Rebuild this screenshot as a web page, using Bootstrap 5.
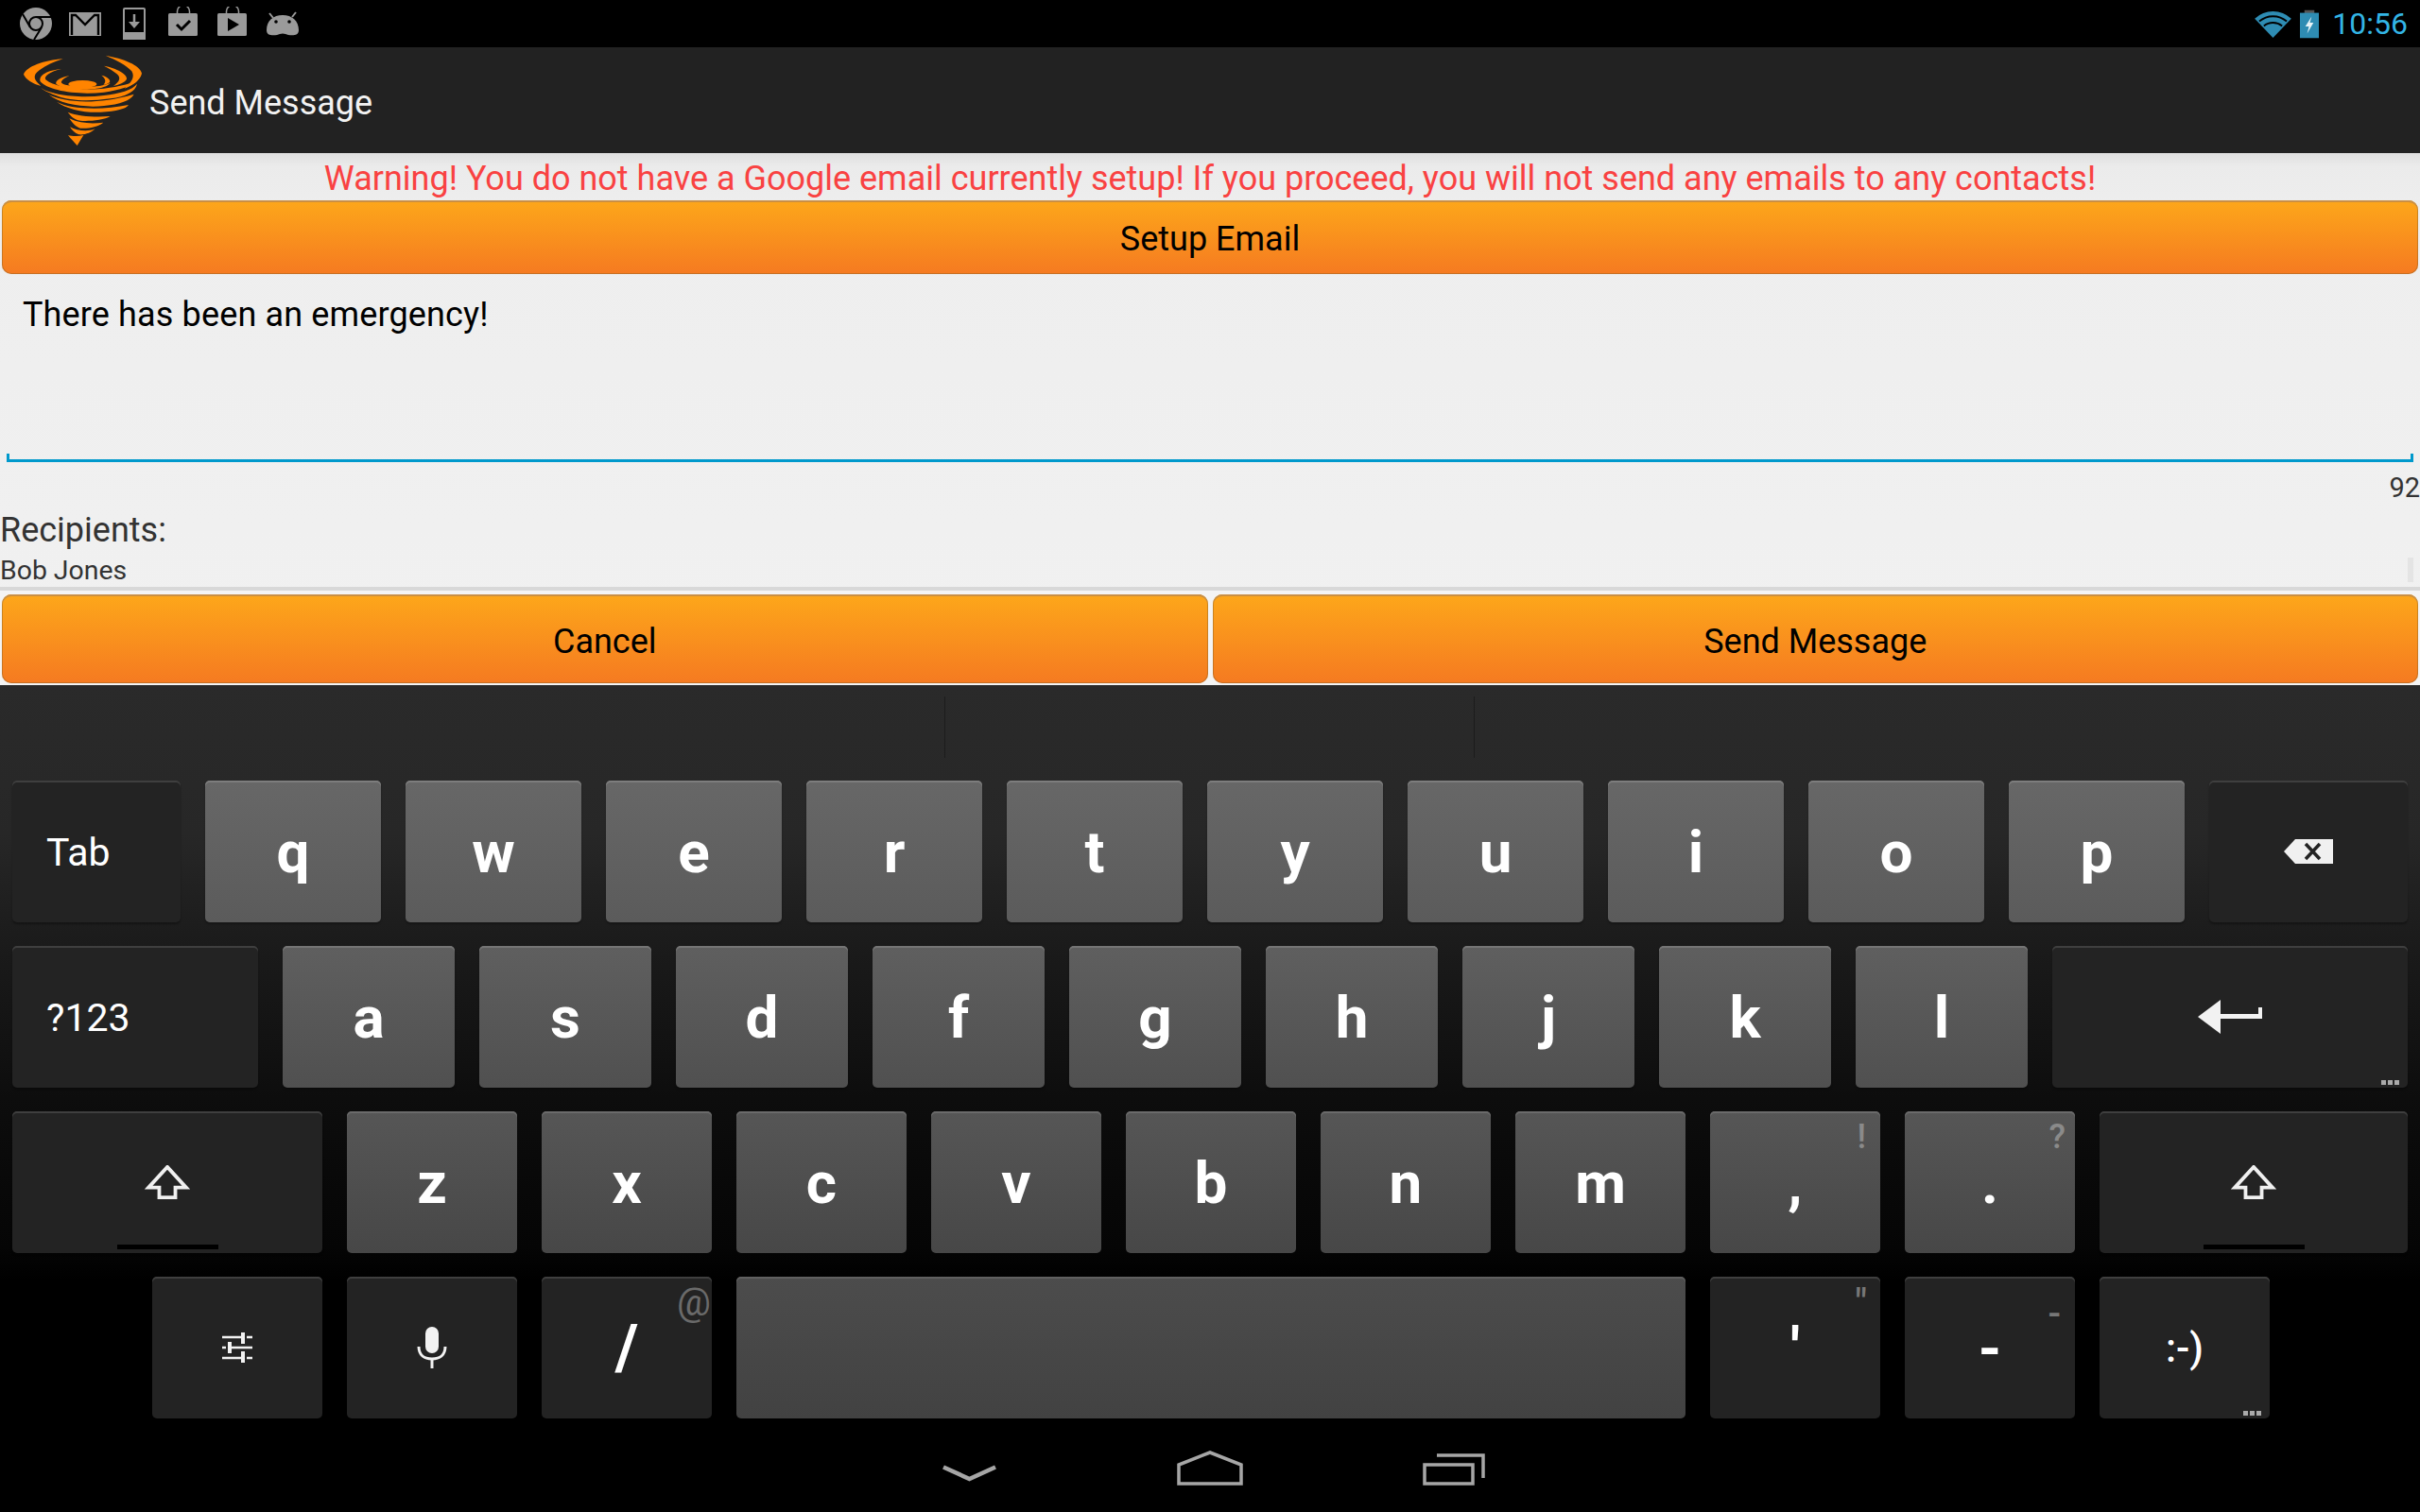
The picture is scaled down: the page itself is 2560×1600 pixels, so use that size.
<!DOCTYPE html>
<html lang="en">
<head>
<meta charset="utf-8">
<title>Send Message</title>
<link href="https://cdn.jsdelivr.net/npm/bootstrap@5.3.0/dist/css/bootstrap.min.css" rel="stylesheet">
<style>
html,body{margin:0;background:#000;}
body{width:2560px;height:1600px;overflow:hidden;font-family:Roboto,"Liberation Sans",sans-serif;}
.sbar{height:50px;background:#000;padding:0 13px 0 21px;}
.si2{margin-left:18px}.si3{margin-left:23px}.si4{margin-left:24px;margin-bottom:4px}.si5{margin-left:20px;margin-bottom:4px}.si6{margin-left:19px}
.clock{font-size:32px;color:#33b5e5;line-height:50px;margin-left:14px;}
.wifi{margin-right:9px}
.abar{height:112px;background:#222;padding-left:23px;}
.abar-title{font-size:36px;color:#f2f2f2;margin-left:7px;margin-top:5px;}
.content{height:563px;background:linear-gradient(#dfdfdf 0,#ebebeb 14px,#eee 60px,#f1f1f1 100%);}
.warn{height:50px;line-height:55px;text-align:center;font-size:36px;color:#f94242;}
.obtn{display:block;border:0;border-radius:10px;width:100%;padding:4px 0 0;color:#000;font-family:inherit;font-size:36px;background:linear-gradient(#fda71a 0,#f57a21 100%);box-shadow:inset 0 2px 0 #c98f45,inset 0 0 0 1px rgba(140,100,40,.45);}
.setup{height:78px;}
.padh2{padding:0 2px;}
.msg{height:199px;padding:19px 24px 0;font-size:36px;line-height:48px;color:#000;letter-spacing:.14px;}
.uline{height:9px;margin:-9px 7px 0;border:solid #0099cc;border-width:0 3px 3px 3px;}
.count{height:43px;text-align:right;font-size:29px;line-height:55px;color:#333;}
.rlabel{font-size:36px;line-height:58px;color:#333;height:44px;}
.rname{font-size:28.4px;line-height:55px;color:#333;height:45px;position:relative;}
.sbthumb{position:absolute;right:7px;top:14px;width:6px;height:26px;background:#e4e4e4;}
.rule{height:4px;background:#d8d8d8;}
.pair{height:100px;padding:4px 2px 2px;gap:5px;background:#f4f4f4;}
.pair .obtn{height:94px;flex:1 1 0;padding-top:6px;}
.kbd{height:875px;background:linear-gradient(#2a2a2a 0,#272727 18%,#1c1c1c 30%,#0d0d0d 50%,#050505 68%,#000 72%);}
.strip{height:101px;position:relative;}
.sdiv{position:absolute;top:12px;width:1px;height:65px;background:#1c1c1c;}
.krows{display:flex;flex-direction:column;gap:25px;padding-left:13px;}
.krow{display:flex;gap:26px;height:150px;}
.key{position:relative;display:flex;align-items:center;justify-content:center;height:150px;border-radius:5px;color:#fff;font-weight:700;font-size:62px;flex:none;}
.kl1{background:linear-gradient(#676767,#5b5b5b);box-shadow:inset 0 2px 0 #7d7d7d,0 2px 2px rgba(0,0,0,.25);}
.kl2{background:linear-gradient(#5f5f5f,#505050);box-shadow:inset 0 2px 0 #757575,0 2px 2px rgba(0,0,0,.25);}
.kr3{background:linear-gradient(#565656,#474747);box-shadow:inset 0 2px 0 #6b6b6b;}
.ksp{background:linear-gradient(#4c4c4c,#424242);box-shadow:inset 0 2px 0 #606060;}
.kd{background:#232323;box-shadow:inset 0 2px 0 #3f3f3f,0 2px 2px rgba(0,0,0,.3);}
.kt{font-weight:400;font-size:41px;justify-content:flex-start;padding:3px 0 0 36px;}
.w186{width:186px}.w182{width:182px}.w180{width:180px}
.hint{position:absolute;color:#8a8a8a;font-weight:500;line-height:1;}
.dots{position:absolute;right:9px;bottom:3px;display:flex;gap:2px;}
.dots i{display:block;width:5px;height:5px;background:#aaa;}
.shbar{position:absolute;left:50%;bottom:4px;width:107px;height:5px;margin-left:-53px;background:#000;}
.navwrap{height:99px;padding:0 0 28px 997px;gap:191px;}
.chev{margin-bottom:4px}
</style>
</head>
<body>
<div class="sbar d-flex align-items-center justify-content-between">
  <div class="d-flex align-items-center">
    <svg width="34" height="34" viewBox="0 0 34 34"><circle cx="17" cy="17" r="17" fill="#9a9a9a"/><circle cx="17" cy="17" r="7" fill="none" stroke="#000" stroke-width="2"/><path d="M17 10H33M11 21 3 7M23 21 15 34" stroke="#000" stroke-width="2" fill="none"/></svg>
    <svg class="si2" width="34" height="25" viewBox="0 0 34 25"><rect width="34" height="25" fill="#9a9a9a"/><path d="M3 24V3H7L17 13 27 3H31V24" fill="none" stroke="#000" stroke-width="2.4"/></svg>
    <svg class="si3" width="24" height="34" viewBox="0 0 24 34"><rect x="1" y="1" width="22" height="32" rx="1" fill="none" stroke="#9a9a9a" stroke-width="2"/><rect y="26" width="24" height="8" fill="#9a9a9a"/><path d="M12 7V19" stroke="#9a9a9a" stroke-width="2.5"/><path d="M6 15H18L12 22Z" fill="#9a9a9a"/></svg>
    <svg class="si4" width="32" height="32" viewBox="0 0 32 32"><path d="M9.500 8V5A6.500 6.500 0 0 1 22.500 5V8" fill="none" stroke="#9a9a9a" stroke-width="1.500"/><rect y="7" width="31" height="24" rx="1.500" fill="#9a9a9a"/><path d="M9 19 14 24 23 15" fill="none" stroke="#000" stroke-width="3"/></svg>
    <svg class="si5" width="32" height="32" viewBox="0 0 32 32"><path d="M9.500 8V5A6.500 6.500 0 0 1 22.500 5V8" fill="none" stroke="#9a9a9a" stroke-width="1.500"/><rect y="7" width="31" height="24" rx="1.500" fill="#9a9a9a"/><path d="M11 12 23 19 11 26Z" fill="#000"/></svg>
    <svg class="si6" width="36" height="26" viewBox="0 0 36 26"><path d="M4 2 8 7M32 1 28 6" stroke="#9a9a9a" stroke-width="2"/><path d="M1 20C1 10 8 4 18 4S35 10 35 20C35 25 30 26 24 25 20 23 16 23 12 25 6 26 1 25 1 20Z" fill="#9a9a9a"/><circle cx="11" cy="11" r="1.800" fill="#000"/><circle cx="25" cy="11" r="1.800" fill="#000"/></svg>
  </div>
  <div class="d-flex align-items-center">
    <svg class="wifi" width="39" height="30" viewBox="0 0 40 31"><path d="M0 10A29 29 0 0 1 40 10L20 31Z" fill="#2e8cb3"/><path d="M5 13A23 23 0 0 1 35 13M10 18A16 16 0 0 1 30 18" fill="none" stroke="#000" stroke-width="2"/></svg>
    <svg width="20" height="31" viewBox="0 0 21 31"><rect x="5" width="11" height="4" fill="#555"/><rect y="3" width="21" height="28" fill="#2e8cb3"/><path d="M13 7 6 18H10L8 26 15 14H11Z" fill="#e6f3f8"/></svg>
    <span class="clock">10:56</span>
  </div>
</div>
<div class="abar d-flex align-items-center">
  <svg width="128" height="98" viewBox="69 170 384 294" fill="#ff8400">
    <path d="M200 186C140 190 85 210 75 235 80 250 105 265 130 272 110 255 100 240 125 222 145 208 170 195 200 186Z"/>
    <path d="M335 175C390 185 445 205 450 232 445 255 420 270 395 280 415 262 430 245 418 225 400 205 370 190 335 175Z"/>
    <path d="M195 218C150 222 122 238 128 258 150 285 240 302 330 292 380 286 420 272 437 255 420 262 380 275 330 280 260 288 170 275 145 252 138 240 160 226 195 218Z"/>
    <path d="M330 208C370 215 405 235 402 250 395 262 375 268 360 272 380 258 385 245 370 233 360 225 345 215 330 208Z"/>
    <path d="M220 240C195 243 175 255 178 265 190 278 240 285 290 282 320 280 345 272 350 262 330 272 290 276 250 274 215 272 190 266 195 258 198 250 208 245 220 240Z"/>
    <path d="M322 238C340 242 352 252 348 260 342 266 335 268 328 268 338 258 335 248 322 238Z"/>
    <ellipse cx="262" cy="266" rx="45" ry="12"/>
    <path d="M130 278C160 300 250 312 330 302 380 296 420 285 435 265 430 290 400 305 350 312 280 322 220 318 185 305 160 295 140 288 130 278Z"/>
    <path d="M155 300C200 322 300 335 425 298 415 318 380 330 330 335 270 342 190 330 155 300Z"/>
    <path d="M180 322C220 345 320 350 408 332 400 345 370 352 320 355 270 358 210 345 180 322Z"/>
    <path d="M215 355C250 368 300 372 350 368 330 380 280 385 255 382 235 378 225 368 215 355Z"/>
    <path d="M220 375C255 392 295 392 328 388 310 402 280 408 255 406 240 402 230 390 220 375Z"/>
    <path d="M222 402C245 415 280 418 302 408 290 420 270 428 250 426 238 422 228 412 222 402Z"/>
    <path d="M216 428C230 432 250 432 265 428L245 461C235 450 225 440 216 428Z"/>
  </svg>
  <span class="abar-title">Send Message</span>
</div>
<main class="content">
  <div class="warn">Warning! You do not have a Google email currently setup! If you proceed, you will not send any emails to any contacts!</div>
  <div class="padh2"><button class="obtn setup" type="button">Setup Email</button></div>
  <div class="msg">There has been an emergency!</div>
  <div class="uline"></div>
  <div class="count">92</div>
  <div class="rlabel">Recipients:</div>
  <div class="rname">Bob Jones<span class="sbthumb"></span></div>
  <div class="rule"></div>
  <div class="pair d-flex"><button class="obtn" type="button">Cancel</button><button class="obtn" type="button">Send Message</button></div>
</main>
<div class="kbd">
  <div class="strip"><span class="sdiv" style="left:999px"></span><span class="sdiv" style="left:1559px"></span></div>
  <div class="krows">
    <div class="krow">
      <div class="key kd kt" style="width:178px">Tab</div>
      <div class="key kl1 w186">q</div><div class="key kl1 w186">w</div><div class="key kl1 w186">e</div><div class="key kl1 w186">r</div><div class="key kl1 w186">t</div><div class="key kl1 w186">y</div><div class="key kl1 w186">u</div><div class="key kl1 w186">i</div><div class="key kl1 w186">o</div><div class="key kl1 w186">p</div>
      <div class="key kd" style="width:210px"><svg width="52" height="26" viewBox="0 0 52 26"><path d="M0 13 12 0H52V26H12Z" fill="#f0f0f0"/><path d="M23 5 38 21M38 5 23 21" stroke="#232323" stroke-width="3.500"/></svg></div>
    </div>
    <div class="krow">
      <div class="key kd kt" style="width:260px">?123</div>
      <div class="key kl2 w182">a</div><div class="key kl2 w182">s</div><div class="key kl2 w182">d</div><div class="key kl2 w182">f</div><div class="key kl2 w182">g</div><div class="key kl2 w182">h</div><div class="key kl2 w182">j</div><div class="key kl2 w182">k</div><div class="key kl2 w182">l</div>
      <div class="key kd" style="width:376px"><svg width="68" height="36" viewBox="0 0 68 36"><path d="M0 18 24 0V15H64V8H68V20H24V36Z" fill="#f2f2f2"/></svg><span class="dots"><i></i><i></i><i></i></span></div>
    </div>
    <div class="krow">
      <div class="key kd" style="width:328px"><svg width="48" height="36" viewBox="0 0 48 38"><path d="M24 2 45 25H33V36H15V25H3Z" fill="none" stroke="#f0f0f0" stroke-width="4"/></svg><span class="shbar"></span></div>
      <div class="key kr3 w180">z</div><div class="key kr3 w180">x</div><div class="key kr3 w180">c</div><div class="key kr3 w180">v</div><div class="key kr3 w180">b</div><div class="key kr3 w180">n</div><div class="key kr3 w180">m</div>
      <div class="key kr3 w180">,<span class="hint" style="right:15px;top:9px;font-size:36px">!</span></div>
      <div class="key kr3 w180">.<span class="hint" style="right:10px;top:9px;font-size:36px">?</span></div>
      <div class="key kd" style="width:326px"><svg width="48" height="36" viewBox="0 0 48 38"><path d="M24 2 45 25H33V36H15V25H3Z" fill="none" stroke="#f0f0f0" stroke-width="4"/></svg><span class="shbar"></span></div>
    </div>
    <div class="krow" style="padding-left:148px">
      <div class="key kd" style="width:180px"><svg width="32" height="32" viewBox="0 0 32 32"><path d="M0 5H20M26 5H32M0 16H4M10 16H32M0 27H20M26 27H32" stroke="#f2f2f2" stroke-width="2.500" fill="none"/><rect x="20" y="0" width="4" height="12" fill="#f2f2f2"/><rect x="6" y="10" width="4" height="12" fill="#f2f2f2"/><rect x="20" y="20" width="4" height="12" fill="#f2f2f2"/></svg></div>
      <div class="key kd w180"><svg width="32" height="44" viewBox="0 0 32 44"><rect x="9" y="0" width="14" height="28" rx="7" fill="#f2f2f2"/><path d="M2 21C2 30 8 34 16 34S30 30 30 21" fill="none" stroke="#f2f2f2" stroke-width="3"/><path d="M16 34V44" stroke="#f2f2f2" stroke-width="3"/></svg></div>
      <div class="key kd w180" style="font-size:66px">/<span class="hint" style="right:1px;top:8px;font-size:40px;color:#6a6a6a;font-weight:400">@</span></div>
      <div class="key ksp" style="width:1004px"></div>
      <div class="key kd w180">'<span class="hint" style="right:14px;top:8px;font-size:40px;color:#777">"</span></div>
      <div class="key kd w180">-<span class="hint" style="right:15px;top:20px;font-size:40px;color:#777">-</span></div>
      <div class="key kd w180" style="font-size:42px;font-weight:500">:-)<span class="dots"><i></i><i></i><i></i></span></div>
    </div>
  </div>
  <div class="navwrap d-flex align-items-end">
    <svg class="chev" width="57" height="18" viewBox="0 0 57 18"><path d="M1 2.500 28.500 15 56 2.500" fill="none" stroke="#a6a6a6" stroke-width="4.500"/></svg>
    <svg width="70" height="37" viewBox="0 0 70 37"><path d="M2 35V15L35 2 68 15V35Z" fill="none" stroke="#a6a6a6" stroke-width="3.500"/></svg>
    <svg width="66" height="34" viewBox="0 0 66 34" style="margin-left:-1px"><path d="M15 2H64V26" fill="none" stroke="#a6a6a6" stroke-width="3.500"/><rect x="2" y="12" width="51" height="20" fill="none" stroke="#a6a6a6" stroke-width="3.500"/></svg>
  </div>
</div>
</body>
</html>
